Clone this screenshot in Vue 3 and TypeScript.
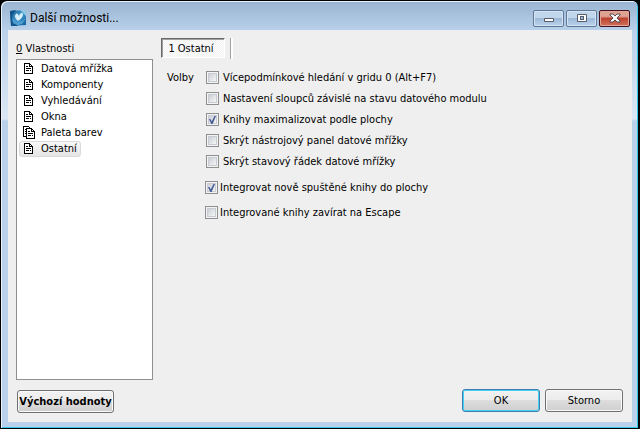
<script setup lang="ts">
import { ref } from 'vue'

interface Option {
  id: string
  label: string
  checked: boolean
}

const sections = ['Datová mřížka', 'Komponenty', 'Vyhledávání', 'Okna', 'Paleta barev', 'Ostatní']
const selected = ref('Ostatní')

const gridOptions = ref<Option[]>([
  { id: 'search', label: 'Vícepodmínkové hledání v gridu 0 (Alt+F7)', checked: false },
  { id: 'columns', label: 'Nastavení sloupců závislé na stavu datového modulu', checked: false },
  { id: 'maximize', label: 'Knihy maximalizovat podle plochy', checked: true },
  { id: 'toolbar', label: 'Skrýt nástrojový panel datové mřížky', checked: false },
  { id: 'status', label: 'Skrýt stavový řádek datové mřížky', checked: false },
])

const bookOptions = ref<Option[]>([
  { id: 'integrate', label: 'Integrovat nově spuštěné knihy do plochy', checked: true },
  { id: 'escape', label: 'Integrované knihy zavírat na Escape', checked: false },
])
</script>

<template>
  <div class="window">
    <header class="titlebar">
      <svg class="app-icon" width="16" height="16" viewBox="0 0 16 16" aria-hidden="true">
        <defs>
          <linearGradient id="logo" x1="0" y1="0" x2="1" y2="1">
            <stop offset="0" stop-color="#1a5c92" />
            <stop offset="0.5" stop-color="#3f97cb" />
            <stop offset="1" stop-color="#0a5c98" />
          </linearGradient>
        </defs>
        <path d="M0 1L16 0V15L1 16Z" fill="url(#logo)" />
        <path d="M0 1L6 0L2 6L3 11L8 16H1Z" fill="#12558c" />
        <path d="M10 0H16V6L13 3Z" fill="#8cc8e6" />
        <path d="M2 8L6 12L12 11L16 8L12 14L7 15L3 13Z" fill="#4e9fd0" />
        <path d="M8 11C5 8 4 6 6 4C7 3 8 4 9 6C10 3 12 2 13 4C13 7 11 9 8 11Z" fill="#d8eefa" />
      </svg>
      <h1>Další možnosti...</h1>
      <div class="caption-buttons">
        <button type="button" class="caption" aria-label="Minimalizovat">
          <svg width="12" height="12" viewBox="0 0 12 12">
            <rect x="1" y="6" width="10" height="4" rx="1" fill="#555e6a" />
            <rect x="2" y="7" width="8" height="2" fill="#fff" />
          </svg>
        </button>
        <button type="button" class="caption" aria-label="Maximalizovat">
          <svg width="12" height="12" viewBox="0 0 12 12">
            <rect x="1" y="2" width="10" height="8" rx="1" fill="#555e6a" />
            <path d="M2 3H10V9H2Z" fill="#fff" />
            <path d="M4 4H8V8H4Z" fill="#555e6a" />
            <path d="M5 5H7V7H5Z" fill="#9cb9d8" />
          </svg>
        </button>
        <button type="button" class="caption close" aria-label="Zavřít">
          <svg width="12" height="12" viewBox="0 0 12 12">
            <path d="M1 2H4L6 4L8 2H11V3L8 6L11 9V10H8L6 8L4 10H1V9L4 6L1 3Z" fill="#f7f7f7" stroke="#5b4a54" />
          </svg>
        </button>
      </div>
    </header>

    <main class="body">
      <div class="columns">
        <nav class="side">
          <h2><u>0</u> Vlastnosti</h2>
          <ul class="list">
            <li v-for="name in sections" :key="name">
              <svg width="15" height="16" viewBox="0 0 15 16" aria-hidden="true" shape-rendering="crispEdges">
                <template v-if="name === 'Paleta barev'">
                  <path d="M4 11H1V1H6L9 4" fill="#fff" stroke="#000" transform="translate(.5 .5)" />
                  <path d="M3 4H4V5H3ZM3 6H4V7H3ZM3 8H4V9H3Z" fill="#000" />
                  <path d="M4 3H9L12 6V13H4Z" fill="#fff" stroke="#000" transform="translate(.5 .5)" />
                  <path d="M9 3H10V6H12V7H9ZM6 6H8V7H6ZM6 8H11V9H6ZM6 10H9V11H6ZM10 10H11V11H10Z" fill="#000" />
                </template>
                <template v-else>
                  <path d="M2 2H7L10 5V12H2Z" fill="#fff" stroke="#000" transform="translate(.5 .5)" />
                  <path d="M7 2H8V5H10V6H7ZM4 5H6V6H4ZM4 7H9V8H4ZM4 9H7V10H4ZM8 9H9V10H8Z" fill="#000" />
                </template>
              </svg>
              <button type="button" :class="{ active: selected === name }" @click="selected = name">{{ name }}</button>
            </li>
          </ul>
        </nav>

        <section class="content">
          <div class="tabs">
            <button type="button" class="tab">1 Ostatní</button>
          </div>
          <div class="group">
            <h2>Volby</h2>
            <div class="options">
              <label v-for="o in gridOptions" :key="o.id">
                <input v-model="o.checked" type="checkbox" />
                <span>{{ o.label }}</span>
              </label>
              <div class="books">
                <label v-for="o in bookOptions" :key="o.id">
                  <input v-model="o.checked" type="checkbox" />
                  <span>{{ o.label }}</span>
                </label>
              </div>
            </div>
          </div>
        </section>
      </div>

      <footer class="actions">
        <button type="button" class="push reset">Výchozí hodnoty</button>
        <button type="button" class="push primary">OK</button>
        <button type="button" class="push">Storno</button>
      </footer>
    </main>
  </div>
</template>

<style>
body {
  margin: 0;
  background: #000;
}
</style>

<style scoped>
* {
  box-sizing: border-box;
}

.window {
  display: flex;
  flex-direction: column;
  min-height: 100vh;
  padding: 0 6px 6px 7px;
  border: 1px solid #000;
  border-right-width: 2px;
  border-radius: 7px 7px 0 0;
  background: linear-gradient(#99b4d1 0, #b9d1ea 30px, #dbe7f4 118px, #b9d1ea 120px);
  box-shadow: inset 1px 1px #e8f2fb, inset -1px -1px #35c8ea;
  color: #000;
  font: 11px/16px "DejaVu Sans Condensed", "Noto Sans", sans-serif;
}

h1,
h2,
ul {
  margin: 0;
  padding: 0;
  font: inherit;
}

button {
  padding: 0;
  color: inherit;
  font: inherit;
}

.titlebar {
  display: flex;
  align-items: center;
  gap: 4px;
  height: 29px;
  padding: 5px 2px 0;
}

h1 {
  flex: 1;
  font: 12px/16px Roboto, "Noto Sans", sans-serif;
}

.caption-buttons {
  display: flex;
  gap: 2px;
}

.caption {
  display: flex;
  align-items: center;
  justify-content: center;
  width: 31px;
  height: 17px;
  border: 1px solid #5f7898;
  border-radius: 2px;
  background: linear-gradient(#c1d5eb 0 48%, #9cb9d8 50%, #bcd3eb);
  box-shadow: inset 0 0 0 1px #d5e4f3;
}

.close {
  border-color: #45101e;
  background: linear-gradient(#dda292 0 35%, #bd4330 50%, #d1735d);
  box-shadow: inset 0 0 0 1px #e2a697;
}

.body {
  display: flex;
  flex: 1;
  flex-direction: column;
  padding: 8px 9px 9px 8px;
  background: #efefef;
}

.columns {
  display: flex;
  flex: 1;
  gap: 8px;
}

.side {
  display: flex;
  flex-direction: column;
  width: 137px;
  padding-top: 3px;
}

.list {
  flex: 1;
  margin-top: 2px;
  padding: 1px 4px;
  border: 1px solid #8e8f8f;
  background: #fff;
  list-style: none;
}

.list li {
  display: flex;
  height: 16px;
  padding-left: 1px;
}

.list li:has(.active) {
  width: max-content;
  margin-left: -2px;
  padding-left: 2px;
  border: 1px solid #d9d9d9;
  border-radius: 3px;
  background: linear-gradient(#f8f8f8, #e5e5e5);
}

.list li:has(.active) svg {
  margin-top: -1px;
}

.list button {
  margin-left: 4px;
  padding-right: 3px;
  border: 0;
  background: none;
  white-space: nowrap;
}

.list .active {
  line-height: 14px;
}

.content {
  flex: 1;
}

.tabs {
  display: flex;
}

.tabs::after {
  width: 2px;
  height: 21px;
  margin-left: 5px;
  border-left: 1px solid #a0a0a0;
  background: #fff;
  content: "";
}

.tab {
  width: 64px;
  height: 20px;
  padding: 1px 4px 0 0;
  border: 1px solid;
  border-color: #696969 #fff #fff #696969;
  background: repeating-conic-gradient(#fff 0 25%, #f0f0f0 0 50%) 0 0 / 2px 2px;
  box-shadow: inset 1px 1px #a0a0a0;
}

.group {
  display: flex;
  gap: 12px;
  padding: 8px 0 0 6px;
}

.group h2 {
  width: 27px;
  line-height: 21px;
}

.options {
  display: flex;
  flex-direction: column;
}

.options label {
  display: flex;
  align-items: center;
  gap: 4px;
  height: 21px;
}

.books {
  display: flex;
  flex-direction: column;
  gap: 4px;
  margin: 5px 0 0 -1px;
}

.books label {
  gap: 2px;
}

input {
  appearance: none;
  flex: none;
  width: 13px;
  height: 13px;
  margin: 0;
  padding: 2px;
  border: 1px solid #8e8f8f;
  background: linear-gradient(135deg, #cbcfd5, #f6f6f6) content-box, #f4f4f4;
  box-shadow: inset 0 0 0 1px #f4f4f4, inset 0 0 0 2px #c8ccd2;
}

input:checked::before {
  display: block;
  width: 7px;
  height: 8px;
  background: #4a5f97;
  clip-path: polygon(0 42%, 18% 35%, 40% 65%, 78% 0, 100% 0, 52% 100%, 32% 100%);
  content: "";
}

.actions {
  display: flex;
  gap: 5px;
  padding: 9px 0 0 1px;
}

.push {
  width: 78px;
  height: 23px;
  border: 1px solid #707070;
  border-radius: 3px;
  background: linear-gradient(#f2f2f2, #ebebeb 49%, #dddddd 50%, #cfcfcf);
  box-shadow: inset 0 0 0 1px #fafafa;
}

.reset {
  width: 97px;
  margin: 1px auto 0 0;
  font-weight: bold;
  white-space: nowrap;
}

.primary {
  border-color: #3c7fb1;
  box-shadow: inset 0 0 0 1px #45d0f5;
}
</style>
